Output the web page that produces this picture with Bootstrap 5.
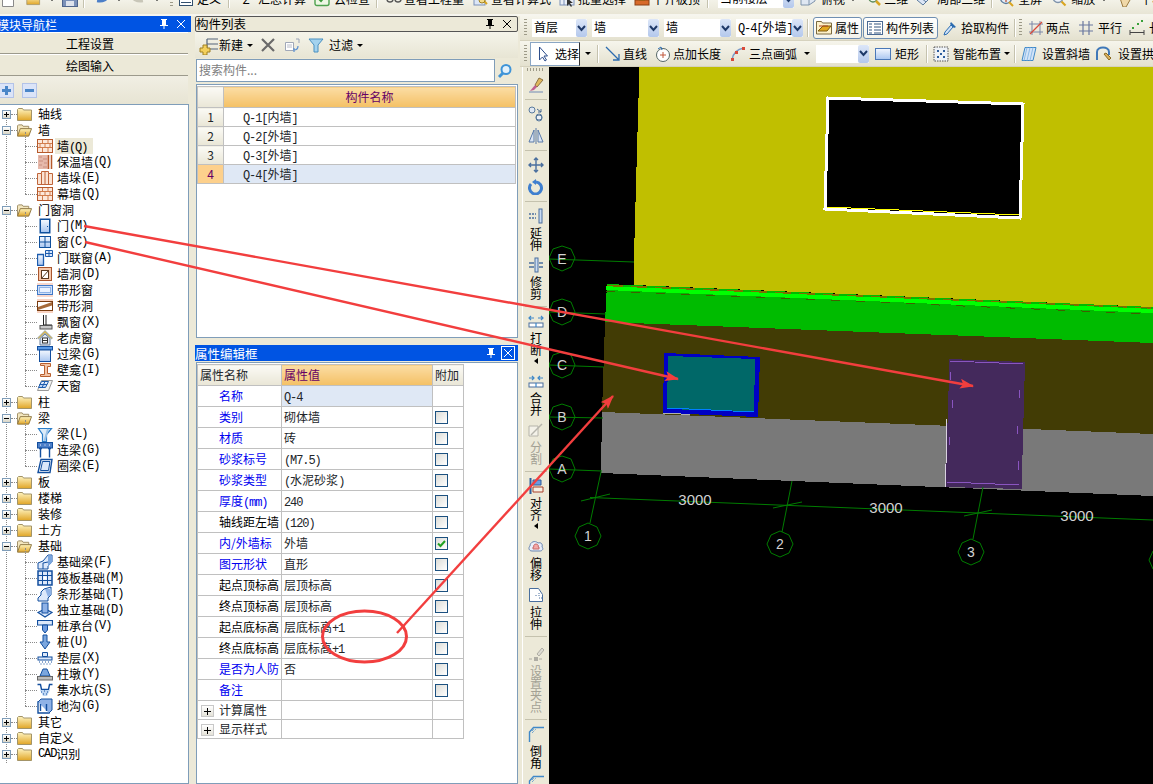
<!DOCTYPE html>
<html lang="zh-CN">
<head>
<meta charset="UTF-8">
<title>GCL</title>
<link href="https://cdn.jsdelivr.net/npm/bootstrap@5.3.0/dist/css/bootstrap.min.css" rel="stylesheet">
<style>
html, body { height: 784px; overflow: hidden; }
body { background: #ece9d8; color: #000; font: 12px/16px "Noto Sans CJK SC", "Liberation Sans", sans-serif; position: relative; }
.lat { font: 12px/12px "Liberation Mono", monospace; letter-spacing: -1.1px; }
.ico { width: 16px; height: 16px; flex: none; display: block; }
.sp1 { margin-left: 1px; } .sp3 { margin-left: 3px; } .sp4 { margin-left: 4px; } .sp5 { margin-left: 5px; }
.sp6 { margin-left: 6px; } .sp7 { margin-left: 7px; } .sp8 { margin-left: 8px; } .sp9 { margin-left: 9px; } .sp10 { margin-left: 10px; }

/* toolbars */
.top-bar { height: 16px; overflow: hidden; background: linear-gradient(#f3f2e8, #e8e5d5); border-bottom: 2px solid #f6f5ee; }
.top-inner { height: 22px; margin-top: -12px; }
.tool-row { height: 25px; flex: none; background: linear-gradient(#f6f5ec, #e4e1cf); border-bottom: 1px solid #d6d2be; white-space: nowrap; overflow: hidden; }
.tool-row-low { height: 26px; }
.tool-btn { display: inline-flex; align-items: center; padding: 0; border: 0; border-radius: 0; color: #000; font-size: 12px; line-height: 16px; white-space: nowrap; flex: none; }
.tool-grip { width: 3px; height: 18px; flex: none; background: repeating-linear-gradient(#9d9a88 0 1px, transparent 1px 3px); }
.tool-sep { width: 1px; height: 18px; flex: none; background: #c5c2ae; border-right: 1px solid #fff; box-sizing: content-box; }
.tool-caret { width: 0; height: 0; flex: none; border: 3px solid transparent; border-top: 3px solid #000; border-bottom: 0; }
.gap2 { gap: 2px; } .gap3 { gap: 3px; } .gap4 { gap: 4px; } .gap5 { gap: 5px; } .gap6 { gap: 6px; } .gap8 { gap: 8px; } .gap9 { gap: 9px; }
.sel-box { height: 18px; background: #fff; flex: none; overflow: hidden; padding-left: 2px; }
.sel-text { flex: 1; overflow: hidden; white-space: nowrap; }
.sel-arrow { width: 11px; flex: none; background: linear-gradient(#dce6f8, #b4c8ec); display: flex; align-items: center; justify-content: center; border-radius: 2px; }
.w53 { width: 53px; } .w55 { width: 55px; } .w67 { width: 67px; } .w76 { width: 76px; }
.toggle-btn { height: 22px; background: linear-gradient(#fff, #f4f3ea); border: 1px solid #6f8fb2; border-radius: 3px; }
.w49 { width: 49px; } .w50 { width: 50px; } .w75 { width: 75px; }
.pick-btn { background: #fff; border: 1px solid #8aa6c4; border-right-color: #333; height: 24px; padding-left: 7px; gap: 7px; }

/* docking panes */
.nav-pane { width: 195px; flex: none; }
.mid-pane { width: 323px; flex: none; }
.draw-pane { width: 633px; margin-left: 2px; flex: none; }
.work { height: 768px; }
.dock-title { height: 16px; line-height: 15px; flex: none; font-size: 12.5px; white-space: nowrap; overflow: hidden; padding-right: 4px; }
.dock-on { background: #0054e3; color: #fff; }
.dock-off { background: #ece9d8; border: 1px solid #555; border-radius: 2px; line-height: 14px; }
.dock-name { flex: 1; }
.dock-cut { margin-left: -3px; font-size: 12px; }
.dock-short { width: 191px; }
.dock-close { width: 12px; height: 12px; margin-left: 5px; }
.dock-box { outline: 1px solid #fff; outline-offset: 0; border-color: #000; }
.dock-gap { margin-top: 7px; }
.nav-body { width: 189px; flex: 1; min-height: 0; display: flex; flex-direction: column; }
.nav-btn { height: 22px; width: 188px; padding: 0 8px 0 0; background: #ece9d8; border: 0; border-top: 1px solid #fff; border-bottom: 1px solid #9c9a8c; border-radius: 0; font-size: 12px; line-height: 19px; color: #000; flex: none; }
.nav-tool { height: 28px; flex: none; width: 188px; background: linear-gradient(#f1efe4, #e7e4d3); padding-top: 7px; gap: 8px; }
.nav-tool button { width: 15px; height: 15px; border: 1px solid #b3c3e8; background: #dbe4f8; padding: 0; display: flex; align-items: center; justify-content: center; position: relative; }
.nav-tool button:first-child { margin-left: -1px; }
.nav-tool b { display: block; background: #4a86c8; width: 9px; height: 3px; }
.nav-tool .add-mark::after { content: ""; position: absolute; left: 5px; top: 2px; width: 3px; height: 9px; background: #4a86c8; }
.tree-body { position: relative; flex: 1; background: #fff; border: 1px solid #7f9db9; border-left: 0; padding-top: 1px; }
.tree-body::before { content: ""; position: absolute; left: 6px; top: 10px; height: 648px; border-left: 1px dotted #8a8a8a; }
.tree-row { height: 16px; display: flex; align-items: center; white-space: nowrap; position: relative; padding-left: 2px; }
.tree-exp { width: 9px; height: 9px; flex: none; border: 1px solid #7f9db9; background: linear-gradient(#fff, #d8d5c6); position: relative; }
.tree-exp::before { content: ""; position: absolute; left: 1px; top: 3px; width: 5px; height: 1px; background: #000; }
.tree-exp.shut::after { content: ""; position: absolute; left: 3px; top: 1px; width: 1px; height: 5px; background: #000; }
.tree-dash { width: 6px; flex: none; border-top: 1px dotted #8a8a8a; }
.tree-fold { width: 15px; height: 13px; flex: none; margin-right: 6px; }
.tree-kids { position: relative; }
.tree-kids::before { content: ""; position: absolute; left: 25px; top: -6px; bottom: 8px; border-left: 1px dotted #8a8a8a; }
.tree-kids .tree-row { padding-left: 25px; }
.tree-kids .tree-dash { width: 12px; }
.tree-kids .ico { margin-right: 4px; }
.tree-on { background: #ece9d8; margin-left: -2px; padding: 0 6px 0 2px; }

/* component list */
.list-tool { height: 26px; flex: none; background: linear-gradient(#f5f4ea, #e8e5d4); padding-left: 4px; }
.find-row { height: 23px; flex: none; margin: 1px 0 0 1px; width: 321px; }
.find-row .form-control { height: 23px; min-height: 0; padding: 0 2px 3px; border: 1px solid #7f9db9; border-radius: 0; font-size: 12px; box-shadow: none; }
.find-row .form-control::placeholder { color: #808080; }
.find-row .btn { width: 23px; padding: 3px; border: 0; background: transparent; border-radius: 0; }
.grid-box { background: #fff; border: 1px solid #7f9db9; margin: 2px 0 0 1px; width: 322px; padding: 1px 0 0 0; }
.list-box { height: 254px; flex: none; }
.prop-box { flex: 1; margin-top: 1px; }
.data-table { --bs-table-border-color: #c0c0c0; table-layout: fixed; font-size: 12px; line-height: 16px; }
.data-table > :not(caption) > * > * { padding: 0 2px; vertical-align: middle; white-space: nowrap; overflow: hidden; }
.list-table { width: 318px; }
.list-table thead tr { height: 21px; }
.list-table tbody tr { height: 19px; }
.c-no { width: 26px; } .c-name { width: 292px; }
.cell-corner { background-image: linear-gradient(#fbfaf5, #e9e6d6); }
.cell-orange { background-image: linear-gradient(#fbdda4, #f4c064); color: #660066; font-weight: 400; }
.cell-num { text-align: center; background-image: linear-gradient(#fbfaf5, #e9e6d6); }
.data-table .cell-picked { background-color: #fdd08c; background-image: none; color: #660066; }
.data-table .cell-sel { background-color: #dfe8f5; }
.data-table .cell-item { padding-left: 19px; }
.prop-table { width: 266px; }
.prop-table thead tr { height: 21px; }
.prop-table tbody tr { height: 21px; }
.prop-table tbody tr.low-row { height: 19px; }
.c-key { width: 84px; } .c-val { width: 151px; } .c-add { width: 31px; }
.data-table .cell-key { padding-left: 21px; color: #000; }
.data-table .cell-blue { color: #0000f0; }
.data-table .cell-add { padding: 0 0 0 2px; }
.chk-box { display: block; width: 13px; height: 13px; border: 1px solid #1c5180; background: linear-gradient(135deg, #dcdcd7, #fff); }
.plus-box { display: inline-block; width: 13px; height: 12px; border: 1px solid #c8c8c8; background: linear-gradient(#fff, #e4e2d8); position: relative; vertical-align: -2px; margin: 0 5px 0 1px; }
.plus-box::before { content: ""; position: absolute; left: 2px; top: 5px; width: 7px; height: 1px; background: #000; }
.plus-box::after { content: ""; position: absolute; left: 5px; top: 2px; width: 1px; height: 7px; background: #000; }
.data-table .cell-plus { padding-left: 2px; }

/* drawing area */
.vbar { flex: none; border-left: 1px solid #fff; margin-left: 2px; width: 27px; gap: 6px; overflow: hidden; height: 717px; }
.v-grip { width: 18px; height: 3px; flex: none; margin-top: 1px; background: repeating-linear-gradient(90deg, #9d9a88 0 1px, transparent 1px 3px); }
.v-sep { width: 22px; height: 1px; flex: none; background: #c5c2ae; }
.v-btn { display: flex; flex-direction: column; align-items: center; padding: 0; border: 0; border-radius: 0; color: #000; font-size: 12px; line-height: 12px; gap: 3px; flex: none; }
.v-label { width: 12px; word-break: break-all; text-align: center; }
.v-off { color: #a3a194; }
.v-off .ico { opacity: .45; }
.v-caret { width: 0; height: 0; border: 3px solid transparent; border-left: 0; border-right: 4px solid #000; margin: -1px 0 3px; }
.v-more { margin-top: 3px; }
.cad-view { flex: none; display: block; background: #000; width: 604px; height: 717px; }
.mark-up { position: absolute; left: 0; top: 0; width: 1153px; height: 784px; pointer-events: none; }
</style>
</head>
<body>
<svg width="0" height="0" class="position-absolute">
  <defs>
    <linearGradient id="gold" x1="0" y1="0" x2="0" y2="1"><stop offset="0" stop-color="#fff4c0"/><stop offset="1" stop-color="#e0a526"/></linearGradient>
    <linearGradient id="pale" x1="0" y1="0" x2="0" y2="1"><stop offset="0" stop-color="#f4f8ff"/><stop offset="1" stop-color="#a9c6f0"/></linearGradient>
    <symbol id="i-fold" viewBox="0 0 15 13"><path d="M.5 1.500 1.500.5h4l1 1.500h8v10.500H.5z" fill="url(#gold)" stroke="#a39468"/></symbol>
    <symbol id="i-open" viewBox="0 0 16 13"><path d="M.5 12V1.500l1-1h4l1 1.500h6v2.500" fill="#f3e6be" stroke="#9c8a60"/><path d="M3.500 4.500h12l-3 8H.5z" fill="url(#gold)" stroke="#8c7440"/></symbol>
    <symbol id="i-brick" viewBox="0 0 16 16"><rect x=".5" y="1.500" width="15" height="13" fill="#fce7da" stroke="#b65a2c"/><path d="M1 5.500h14M1 9.500h14M5.500 2v3.500M11 2v3.500M3 5.500v4M8 5.500v4M13 5.500v4M5.500 9.500V14M11 9.500V14" stroke="#d17d4e" fill="none"/></symbol>
    <symbol id="i-warm" viewBox="0 0 16 16"><rect x="1" y="1" width="10" height="14" fill="#e6b9ab"/><path d="M2 3h3M6 5h4M2 7h4M7 9h3M2 11h3M6 13h4" stroke="#c98f80"/><path d="M11.500 1v14M14.500 1v14" stroke="#b65a2c" stroke-width="1.500"/></symbol>
    <symbol id="i-pier" viewBox="0 0 16 16"><path d="M.5 3.500h4V1.500h7v2h4v11h-15z" fill="#fbe4d4" stroke="#c0653a"/><path d="M4.500 3.500V14.500M11.500 3.500V14.500M8 2v12" stroke="#c0653a"/></symbol>
    <symbol id="i-door" viewBox="0 0 16 16"><rect x="2.500" y=".5" width="11" height="15" fill="#0e4f9c"/><rect x="4" y="2" width="8" height="12" fill="url(#pale)"/><rect x="10" y="8" width="1" height="1" fill="#0e4f9c"/></symbol>
    <symbol id="i-win" viewBox="0 0 16 16"><rect x="2.500" y="2.500" width="11" height="11" fill="url(#pale)" stroke="#0e4f9c"/><path d="M8 3v10M3 8h10" stroke="#0e4f9c"/></symbol>
    <symbol id="i-doorwin" viewBox="0 0 16 16"><path d="M.5 4.500h6v11h-6z" fill="url(#pale)" stroke="#1d5cae" stroke-width="1.300"/><path d="M8.500.5h7v6h-7zM12 1v5M9 3.500h6" fill="#dbe7fa" stroke="#1d5cae"/></symbol>
    <symbol id="i-hole" viewBox="0 0 16 16"><rect x="1.500" y="1.500" width="13" height="13" fill="#f6c9ad" stroke="#a9552c"/><rect x="4.500" y="4.500" width="7" height="8" fill="#fff" stroke="#5c3a20"/><path d="M4.500 12.500l7-8" stroke="#5c3a20"/></symbol>
    <symbol id="i-swin" viewBox="0 0 16 16"><rect x="0" y="1" width="16" height="14" fill="#f9d8cc"/><rect x=".5" y="3.500" width="15" height="9" fill="#cfe0f8" stroke="#3f78c8"/><rect x="2.500" y="5.500" width="11" height="5" fill="#eaf2ff" stroke="#8fb2e6"/></symbol>
    <symbol id="i-shole" viewBox="0 0 16 16"><rect x="0" y="1" width="16" height="14" fill="#f9d3c2"/><rect x=".5" y="3.500" width="15" height="9" fill="#fff" stroke="#7a3c10"/><path d="M1 9 15 4v3.500L1 12z" fill="#a66a3a"/></symbol>
    <symbol id="i-bay" viewBox="0 0 16 16"><path d="M6.500 1v10M9 1v10M6.500 11H15" stroke="#222" fill="none"/><rect x="3" y="11.500" width="12" height="3.500" fill="#c8c8c8" stroke="#555"/></symbol>
    <symbol id="i-dorm" viewBox="0 0 16 16"><path d="M8 .5 15.500 8l-1 1L8 3 1.500 9l-1-1z" fill="#e0bc50" stroke="#6f8fb8" stroke-width=".6"/><path d="M3 8.500 8 4l5 4.500V15H3z" fill="#dde6f3" stroke="#6a7f98"/><rect x="5.500" y="8" width="5" height="5" fill="#fff" stroke="#333"/><path d="M5.500 10.500h5" stroke="#333"/></symbol>
    <symbol id="i-lint" viewBox="0 0 16 16"><rect x=".5" y=".5" width="15" height="3.500" fill="#5a9ae6" stroke="#124e9e"/><rect x="2.500" y="4" width="11" height="11.500" fill="url(#pale)" stroke="#124e9e"/></symbol>
    <symbol id="i-nich" viewBox="0 0 16 16"><path d="M3.500 1.500h10v3h-3v7h3v3h-10v-2h4v-9h-4z" fill="#f3c5a6" stroke="#b9602e"/></symbol>
    <symbol id="i-sky" viewBox="0 0 16 16"><path d="M4.500 2.500h11l-4 10H.5z" fill="#f1f1ef" stroke="#999"/><path d="M4.500 3.500h7l-3 6h-7z" fill="url(#pale)" stroke="#1d5cae"/><path d="M8 3.500 5 9.500M2.500 6.500h7.500" stroke="#1d5cae"/></symbol>
    <symbol id="i-beam" viewBox="0 0 16 16"><path d="M1.500 2.500h13l-5 6v7h-4v-7z" fill="#dcecf9" stroke="#2c7ec8" stroke-width="1.200"/><path d="M11 3 7.500 15" stroke="#9cc2e6" stroke-width="2"/></symbol>
    <symbol id="i-link" viewBox="0 0 16 16"><rect x=".5" y=".5" width="15" height="5.500" fill="#4c7fc8" stroke="#124e9e"/><path d="M3 3h1M7.500 3h1M12 3h1" stroke="#fff"/><path d="M3.500 6v9.500M12.500 6v9.500M2 6.500h3M11 6.500h3" stroke="#124e9e" stroke-width="1.400"/></symbol>
    <symbol id="i-ring" viewBox="0 0 16 16"><path d="M4 1.500h11l-2 13H1z" fill="#fff" stroke="#124e9e" stroke-width="1.400"/><path d="M5.500 3.500h7.500l-1.500 9H3.500z" fill="#dce8fa" stroke="#124e9e"/></symbol>
    <symbol id="i-fbeam" viewBox="0 0 16 16"><path d="M1 15V9l5-2 5-6h4v7l-4 4v3z" fill="#dce8fa" stroke="#124e9e"/><path d="M11 1.500h4v7l-4 4z" fill="#7ba6de"/><path d="M6 15V9l5-1" fill="none" stroke="#124e9e"/></symbol>
    <symbol id="i-raft" viewBox="0 0 16 16"><rect x="1" y="1" width="14" height="14" fill="#dce8fa" stroke="#124e9e" stroke-width="1.500"/><path d="M1 5.500h14M1 10.500h14M5.500 1v14M10.500 1v14" stroke="#124e9e"/><rect x="6.500" y="6.500" width="3" height="3" fill="#fff"/></symbol>
    <symbol id="i-sfoot" viewBox="0 0 16 16"><path d="M1 15v-3l3-3V6l3-3 7-2v8l-3 3v3z" fill="#dce8fa" stroke="#124e9e"/><path d="M8 3h6v6l-3 2z" fill="#8fb2e6"/></symbol>
    <symbol id="i-ifoot" viewBox="0 0 16 16"><path d="M1 10.500 8 7l7 3.500L8 15z" fill="#dce8fa" stroke="#124e9e" stroke-width="1.200"/><rect x="5" y="1" width="6" height="10" fill="#8fb2e6" stroke="#124e9e"/></symbol>
    <symbol id="i-cap" viewBox="0 0 16 16"><path d="M.5 2.500h15v4.500H.5z" fill="#dce8fa" stroke="#124e9e" stroke-width="1.200"/><path d="M5.500 7h5v5l-2.500 3-2.500-3z" fill="#6d9be0" stroke="#124e9e"/></symbol>
    <symbol id="i-pile" viewBox="0 0 16 16"><path d="M6 1h4v7h3l-5 7-5-7h3z" fill="#7ba6de" stroke="#124e9e"/></symbol>
    <symbol id="i-pad" viewBox="0 0 16 16"><path d="M5.500 2.500h5v4h-5z" fill="#dce8fa" stroke="#124e9e"/><rect x="1" y="7" width="14" height="3" fill="#dce8fa" stroke="#124e9e"/><path d="M2 12h1M5 12h1M8 12h1M11 12h1M14 12h1M3.500 14h1M6.500 14h1M9.500 14h1M12.500 14h1" stroke="#124e9e"/></symbol>
    <symbol id="i-base" viewBox="0 0 16 16"><path d="M6 3h4l3 7H3z" fill="#7ba6de" stroke="#124e9e"/><rect x=".5" y="10.500" width="15" height="3.500" fill="#bdbdbd" stroke="#666"/></symbol>
    <symbol id="i-sump" viewBox="0 0 16 16"><path d="M.5 2.500h3l1 5h7l1-5h3M.5 2.500" fill="none" stroke="#124e9e" stroke-width="1.400"/><path d="M3 8h10l-3 6H6z" fill="#bcd5f3"/><path d="M4 10h1M7 9h1M10 10h1M6 12h1M9 12h1" stroke="#124e9e"/></symbol>
    <symbol id="i-trch" viewBox="0 0 16 16"><path d="M1 4h11v11H1z" fill="#fff" stroke="#124e9e" stroke-width="1.400"/><path d="M1 4l3-3h11v11l-3 3" fill="#8fb2e6" stroke="#124e9e"/><path d="M3.500 6v7M9.500 6v7" stroke="#124e9e" stroke-width="1.400"/></symbol>

    <symbol id="t-doc" viewBox="0 0 16 16"><path d="M2.500 .5h11v15h-11z" fill="#fff" stroke="#8a8a8a"/></symbol>
    <symbol id="t-folder" viewBox="0 0 20 16"><path d="M1 4h7l1 2h8v9H1z" fill="url(#gold)" stroke="#a39468"/></symbol>
    <symbol id="t-save" viewBox="0 0 16 16"><rect x=".5" y=".5" width="15" height="15" fill="#7a90b8" stroke="#4e648c"/><rect x="4" y="10" width="8" height="5" fill="#dde2ec"/></symbol>
    <symbol id="t-undo" viewBox="0 0 16 16"><path d="M14 3c0 6-5 8-11 7" fill="none" stroke="#4c7fc8" stroke-width="2.500"/></symbol>
    <symbol id="t-redo" viewBox="0 0 16 16"><path d="M1 3c0 6 5 8 11 7" fill="none" stroke="#c8c6b8" stroke-width="2.500"/></symbol>
    <symbol id="t-tab" viewBox="0 0 16 16"><rect x="1.500" y="5.500" width="13" height="9" fill="#fff" stroke="#33506e"/><path d="M3 8.500h10M3 11.500h10" stroke="#33506e"/></symbol>
    <symbol id="t-check" viewBox="0 0 16 16"><rect x="1" y="2" width="14" height="12.500" rx="2" fill="#eef7e4" stroke="#4fa24f" stroke-width="1.400"/><path d="M4 7l3 3 5-6" fill="none" stroke="#3c9a3c" stroke-width="2"/></symbol>
    <symbol id="t-glass" viewBox="0 0 16 16"><circle cx="4" cy="8" r="3" fill="none" stroke="#555" stroke-width="1.400"/><circle cx="12" cy="8" r="3" fill="none" stroke="#555" stroke-width="1.400"/><path d="M7 8h2" stroke="#555"/></symbol>
    <symbol id="t-calc" viewBox="0 0 16 16"><rect x="1" y="3" width="11" height="11" fill="#dce6f6" stroke="#7a90b8"/><path d="M9 8l5 5" stroke="#d9a520" stroke-width="2"/><circle cx="9" cy="9" r="3" fill="#f4dc8c" stroke="#a08020"/></symbol>
    <symbol id="t-batch" viewBox="0 0 16 16"><rect x="1" y="3" width="14" height="11" fill="#e9eef7" stroke="#7a90b8"/><path d="M5 3v11M10 3v11M1 8h14" stroke="#7a90b8"/><path d="M8 7v8l2-2 2 3 1-1-2-3h3z" fill="#333"/></symbol>
    <symbol id="t-level" viewBox="0 0 16 16"><rect x="1" y="9" width="14" height="5" fill="#d86a2a" stroke="#8c4014"/><path d="M5 3h6v6H5z" fill="#f0cf60" stroke="#8a6a10"/></symbol>
    <symbol id="t-view" viewBox="0 0 16 16"><path d="M1 5l6-3h8v8l-6 4H1z" fill="#dfe7f2" stroke="#7f93ab"/><path d="M9 14V5l6-3M9 5H1" fill="none" stroke="#7f93ab"/></symbol>
    <symbol id="t-3d" viewBox="0 0 16 16"><circle cx="7" cy="7" r="4" fill="#f2f8ee" stroke="#5a8a5a" stroke-width="1.400"/><path d="M10 10l4 4" stroke="#d9a520" stroke-width="2.500"/></symbol>
    <symbol id="t-part" viewBox="0 0 16 16"><path d="M1 9l8-8 6 5-8 8z" fill="#dce6f6" stroke="#5a7a9c"/><path d="M4 6l6 5M7 3l6 5" stroke="#5a7a9c"/></symbol>
    <symbol id="t-zoomall" viewBox="0 0 16 16"><circle cx="8" cy="7" r="5.500" fill="#e3ecf7" stroke="#5a7a9c" stroke-width="1.300"/><path d="M8 3v8M4 7h8" stroke="#c0563a" stroke-width="1.300"/><path d="M11 11l4 4" stroke="#d9a520" stroke-width="2"/></symbol>
    <symbol id="t-zoom" viewBox="0 0 16 16"><circle cx="7" cy="6.500" r="5" fill="#eef3fa" stroke="#7f93ab" stroke-width="1.300"/><path d="M10.500 10.500l4 4" stroke="#d9a520" stroke-width="2.200"/></symbol>
    <symbol id="t-hand" viewBox="0 0 16 16"><path d="M4 7V3l2-1 1 4V1h2v5l1-4 2 1-1 5 2-1 1 2-4 7H7z" fill="#f0d8a8" stroke="#9a7a40"/></symbol>

    <symbol id="d-prop" viewBox="0 0 16 16"><path d="M.5 3V1.500h5l1 1.500h9v11H.5z" fill="#fdf0c8" stroke="#7a6a40"/><path d="M2 11 7 6h8l-4 5z" fill="#e2a820" stroke="#7a5a10"/><path d="M3 6h9" stroke="#b04a20"/></symbol>
    <symbol id="d-list" viewBox="0 0 16 16"><rect x=".5" y="1.500" width="15" height="13" fill="#fff" stroke="#4a6a94"/><path d="M2 4h3M2 7h3M2 10h3M2 13h3M7 4h7M7 7h7M7 10h7M7 13h7" stroke="#33557f"/></symbol>
    <symbol id="d-pick" viewBox="0 0 16 16"><path d="M9 2l5 5-2 1-4-4z" fill="#2c6cb0"/><path d="M9 5l2 2-6 7-3 1 1-3z" fill="#cfe2f8" stroke="#2c6cb0"/></symbol>
    <symbol id="d-two" viewBox="0 0 16 16"><path d="M4 1v14M12 1v14M1 4h14M1 12h14" stroke="#7a86a8"/><path d="M2 14 14 2" stroke="#d84a3a" stroke-width="1.300"/></symbol>
    <symbol id="d-para" viewBox="0 0 16 16"><path d="M5 1v14M11 1v14M1 5h14M1 11h14" stroke="#6a78a0" stroke-width="1.200"/></symbol>
    <symbol id="d-long" viewBox="0 0 16 16"><path d="M1 10v5M15 10v5M1 12.500h14" stroke="#444"/><path d="M3 8h2M8 4h2M12 1h2" stroke="#38a038" stroke-width="2"/></symbol>
    <symbol id="d-arrow" viewBox="0 0 10 16"><path d="M1.500 1v13l3-3L7 15l1.500-1-2.500-4h3.500z" fill="#fff" stroke="#2a4a8a"/></symbol>
    <symbol id="d-line" viewBox="0 0 16 16"><path d="M1 1l13 13M14 8v6H8" fill="none" stroke="#2c6cb0" stroke-width="1.300"/></symbol>
    <symbol id="d-plus" viewBox="0 0 16 16"><circle cx="8" cy="9" r="6.500" fill="#fff" stroke="#566"/><path d="M5 9h6M8 6v6" stroke="#c0563a"/><path d="M3 3l3-2 1 3" fill="none" stroke="#2c6cb0"/></symbol>
    <symbol id="d-arc" viewBox="0 0 16 16"><path d="M2 14C3 7 7 3 14 2" fill="none" stroke="#7a98c8" stroke-width="1.500"/><rect x="1" y="12" width="3" height="3" fill="#d84a3a"/><rect x="5" y="5" width="3" height="3" fill="#d84a3a"/><rect x="12" y="1" width="3" height="3" fill="#d84a3a"/></symbol>
    <symbol id="d-rect" viewBox="0 0 16 16"><rect x=".5" y="2.500" width="15" height="11" fill="url(#pale)" stroke="#4a78b8"/></symbol>
    <symbol id="d-smart" viewBox="0 0 16 16"><rect x="1" y="1" width="14" height="14" fill="#eef2f7" stroke="#555" stroke-dasharray="1.500 1"/><path d="M4 4h2v2H4zM10 4h2v2h-2zM4 10h2v2H4zM10 10h2v2h-2zM7 7h2v2H7z" fill="#2c5c9c"/></symbol>
    <symbol id="d-skew" viewBox="0 0 16 16"><path d="M4 1.500h11l-3 13H1z" fill="#d3e4f8" stroke="#3f88c8"/><path d="M6 1.500l-3 13M9 1.500l-3 13M12 1.500l-3 13" stroke="#8fbce6"/></symbol>
    <symbol id="d-bow" viewBox="0 0 16 16"><path d="M1 14V6c0-6 12-6 12 0v3" fill="none" stroke="#3f78b8" stroke-width="2"/><path d="M8 8l5 6 2-2-5-5z" fill="#d9b060" stroke="#8a6a20"/></symbol>

    <symbol id="v-brush" viewBox="0 0 16 16"><path d="M11 1l4 2-6 7-2-2z" fill="#e0b85c" stroke="#8a7040"/><path d="M7 8l2 2-3 3-4 1z" fill="#c06090"/><path d="M1 15h14" stroke="#9aa8c0" stroke-width="1.500"/></symbol>
    <symbol id="v-copy" viewBox="0 0 16 16"><circle cx="4" cy="4" r="3" fill="#dfe7f2" stroke="#5a7a9c"/><circle cx="11" cy="12" r="3" fill="#eef2f7" stroke="#5a7a9c"/><circle cx="11" cy="11" r="3" fill="none" stroke="#5a7a9c"/><path d="M9 3l4 3M13 3v3h-3" fill="none" stroke="#4a6a94"/></symbol>
    <symbol id="v-mirror" viewBox="0 0 16 16"><path d="M6 2v12H1zM10 2v12h5z" fill="#dce6f4" stroke="#5a7aa8"/><path d="M8 0v16" stroke="#5a7aa8"/></symbol>
    <symbol id="v-move" viewBox="0 0 16 16"><path d="M8 1v14M1 8h14M6 3l2-2 2 2M6 13l2 2 2-2M3 6 1 8l2 2M13 6l2 2-2 2" fill="none" stroke="#4a6f9e" stroke-width="1.400"/></symbol>
    <symbol id="v-turn" viewBox="0 0 16 16"><path d="M3 5a6 6 0 1 0 5-2" fill="none" stroke="#3f7fcf" stroke-width="3"/><path d="M8 0v6L4 3z" fill="#3f7fcf"/></symbol>
    <symbol id="v-extend" viewBox="0 0 16 16"><rect x="11" y="1" width="3" height="14" fill="#c9dcf4" stroke="#4a6f9e"/><path d="M1 6h7M1 10h7" stroke="#4a6f9e" stroke-dasharray="2 1" stroke-width="1.300"/></symbol>
    <symbol id="v-trim" viewBox="0 0 16 16"><rect x="7" y="1" width="3" height="14" fill="#c9dcf4" stroke="#4a6f9e"/><path d="M1 6h5M11 6h4M1 10h5M11 10h4" stroke="#4a6f9e" stroke-width="1.300"/></symbol>
    <symbol id="v-break" viewBox="0 0 16 16"><rect x="1" y="10" width="14" height="4" fill="#fff" stroke="#4a6f9e"/><path d="M8 10v4M1 5h5M3 3 1 5l2 2M15 5h-5M13 3l2 2-2 2" fill="none" stroke="#3f88c8" stroke-width="1.200"/></symbol>
    <symbol id="v-join" viewBox="0 0 16 16"><rect x="1" y="10" width="14" height="4" fill="#fff" stroke="#4a6f9e"/><path d="M8 10v4M1 5h5M4 3l2 2-2 2M15 5h-5M12 3l-2 2 2 2" fill="none" stroke="#3f88c8" stroke-width="1.200"/></symbol>
    <symbol id="v-split" viewBox="0 0 16 16"><path d="M1 4h9v10H1z" fill="#fff" stroke="#777"/><path d="M3 13 14 2" stroke="#777" stroke-width="1.500"/></symbol>
    <symbol id="v-align" viewBox="0 0 16 16"><path d="M2.500 0v16" stroke="#2c5c9c" stroke-width="2"/><path d="M5 2h8v5H5z" fill="#6d9be0" stroke="#2c5c9c"/><path d="M5 9h10v5H5z" fill="#f6f0e4" stroke="#a8402a"/></symbol>
    <symbol id="v-off" viewBox="0 0 16 16"><path d="M4 13c-3 0-4-3-2-5 0-4 5-6 8-3 3-1 5 1 4 4 2 2 0 4-2 4z" fill="#e8eefa" stroke="#6a86b0"/><path d="M8 6c-2 0-3 2-2 3H5v2h6V9h-1c1-1 0-3-2-3z" fill="#f3a8a8" stroke="#c86a6a"/></symbol>
    <symbol id="v-stretch" viewBox="0 0 16 16"><path d="M1.500 1.500h9l4 6v7h-13z" fill="#fff" stroke="#4a6f9e"/><path d="M11 6v3M11 11h3M8 8v2" stroke="#4a6f9e" stroke-dasharray="1 1"/></symbol>
    <symbol id="v-grip-p" viewBox="0 0 16 16"><path d="M1 13h14" stroke="#666" stroke-dasharray="3 2"/><rect x="6" y="11" width="4" height="4" fill="#666"/><path d="M9 8l5-6 2 2-5 6z" fill="#ccc" stroke="#666"/></symbol>
    <symbol id="v-fillet" viewBox="0 0 16 16"><path d="M1.500 16V6l4-4.500H16" fill="none" stroke="#3f88c8" stroke-width="1.400"/><path d="M4 5l2-2M4 7l4-4" stroke="#3f88c8" stroke-dasharray="1 1"/></symbol>
    <symbol id="m-new" viewBox="0 0 20 20"><path d="M8 4h11M8 9h11M8 14h11M8 4v10" fill="none" stroke="#55657a" stroke-width="1.200"/><path d="M4 10h4v3h3v4H8v3H4v-3H1v-4h3z" fill="#f3d05c" stroke="#a08020"/></symbol>
    <symbol id="m-del" viewBox="0 0 16 16"><path d="M2 2l12 12M14 2 2 14" stroke="#6a6a6a" stroke-width="2.200"/></symbol>
    <symbol id="m-dup" viewBox="0 0 16 16"><path d="M1.500 5.500h8v8h-8z" fill="#fff" stroke="#a0a8b8"/><path d="M3 8h5M3 10h5" stroke="#b8bcc8"/><path d="M12 2h3v4" fill="none" stroke="#9aa4b8"/><path d="M14 9c0 3-2 4-4 4M10 11v4" fill="none" stroke="#5a8fd0" stroke-width="1.200"/></symbol>
    <symbol id="m-filter" viewBox="0 0 16 16"><path d="M1 2h14L10 8v7H6V8z" fill="#a3d2ee" stroke="#4a90c0"/></symbol>
    <symbol id="m-find" viewBox="0 0 16 16"><circle cx="9" cy="6.500" r="4.500" fill="#e3f1fb" stroke="#3f94d8" stroke-width="2"/><path d="M6 10l-4 4" stroke="#3f94d8" stroke-width="3"/></symbol>
    <symbol id="g-pin" viewBox="0 0 12 12"><path d="M3 1h6v1H8v5h2v1H6.500v3h-1V8H2V7h2V2H3z" fill="currentColor"/></symbol>
    <symbol id="g-close" viewBox="0 0 12 12"><path d="M2 2l8 8M10 2l-8 8" stroke="currentColor" fill="none"/></symbol>
    <symbol id="g-down" viewBox="0 0 11 9"><path d="M2 2l3.500 4L9 2" fill="none" stroke="#1f3a68" stroke-width="2"/></symbol>
  </defs>
</svg>

<div class="top-bar">
  <div class="top-inner d-flex align-items-center">
    <svg class="ico"><use href="#t-doc"/></svg>
    <svg class="ico sp10"><use href="#t-folder"/></svg>
    <span class="tool-caret sp7"></span>
    <svg class="ico sp7"><use href="#t-save"/></svg>
    <span class="tool-sep sp5"></span>
    <svg class="ico sp9"><use href="#t-undo"/></svg>
    <span class="tool-caret sp6"></span>
    <svg class="ico sp9"><use href="#t-redo"/></svg>
    <span class="tool-caret sp7"></span>
    <span class="tool-grip sp10"></span>
    <button class="btn tool-btn gap3 sp5"><svg class="ico"><use href="#t-tab"/></svg>定义</button>
    <span class="tool-sep sp7"></span>
    <button class="btn tool-btn gap4 sp8"><span class="ico text-center">Σ</span>汇总计算</button>
    <button class="btn tool-btn gap4 sp8"><svg class="ico"><use href="#t-check"/></svg>云检查</button>
    <span class="tool-sep sp6"></span>
    <button class="btn tool-btn gap2 sp8"><svg class="ico"><use href="#t-glass"/></svg>查看工程量</button>
    <button class="btn tool-btn gap2 sp9"><svg class="ico"><use href="#t-calc"/></svg>查看计算式</button>
    <button class="btn tool-btn gap3 sp8"><svg class="ico"><use href="#t-batch"/></svg>批量选择</button>
    <button class="btn tool-btn gap2 sp8"><svg class="ico"><use href="#t-level"/></svg>平齐板顶</button>
    <span class="tool-sep sp7"></span>
    <div class="sel-box w76 sp9 d-flex"><span class="sel-text">当前楼层</span><span class="sel-arrow"><svg width="11" height="9"><use href="#g-down"/></svg></span></div>
    <button class="btn tool-btn gap5 sp6"><svg class="ico"><use href="#t-view"/></svg>俯视</button>
    <span class="tool-caret sp5"></span>
    <button class="btn tool-btn gap2 sp10"><svg class="ico"><use href="#t-3d"/></svg>三维</button>
    <button class="btn tool-btn gap5 sp8"><svg class="ico"><use href="#t-part"/></svg>局部三维</button>
    <span class="tool-sep sp6"></span>
    <button class="btn tool-btn gap4 sp5"><svg class="ico"><use href="#t-zoomall"/></svg>全屏</button>
    <button class="btn tool-btn gap4 sp9"><svg class="ico"><use href="#t-zoom"/></svg>缩放</button>
    <span class="tool-caret sp6"></span>
    <button class="btn tool-btn gap8 sp9"><svg class="ico"><use href="#t-hand"/></svg>平移</button>
  </div>
</div>

<div class="work d-flex">
  <aside class="nav-pane d-flex flex-column">
    <div class="dock-title dock-on dock-short d-flex align-items-center">
      <span class="dock-name dock-cut">模块导航栏</span>
      <svg class="dock-close"><use href="#g-pin"/></svg>
      <svg class="dock-close"><use href="#g-close"/></svg>
    </div>
    <div class="nav-body">
      <button class="btn nav-btn">工程设置</button>
      <button class="btn nav-btn">绘图输入</button>
      <div class="nav-tool d-flex">
        <button type="button" class="add-mark"><b></b></button>
        <button type="button"><b></b></button>
      </div>
      <div class="tree-body">
        <div class="tree-row"><span class="tree-exp shut"></span><span class="tree-dash"></span><svg class="tree-fold"><use href="#i-fold"/></svg>轴线</div>
        <div class="tree-row"><span class="tree-exp"></span><span class="tree-dash"></span><svg class="tree-fold"><use href="#i-open"/></svg>墙</div>
        <div class="tree-kids">
          <div class="tree-row"><span class="tree-dash"></span><svg class="ico"><use href="#i-brick"/></svg><span class="tree-on">墙<span class="lat">(Q)</span></span></div>
          <div class="tree-row"><span class="tree-dash"></span><svg class="ico"><use href="#i-warm"/></svg>保温墙<span class="lat">(Q)</span></div>
          <div class="tree-row"><span class="tree-dash"></span><svg class="ico"><use href="#i-pier"/></svg>墙垛<span class="lat">(E)</span></div>
          <div class="tree-row"><span class="tree-dash"></span><svg class="ico"><use href="#i-brick"/></svg>幕墙<span class="lat">(Q)</span></div>
        </div>
        <div class="tree-row"><span class="tree-exp"></span><span class="tree-dash"></span><svg class="tree-fold"><use href="#i-open"/></svg>门窗洞</div>
        <div class="tree-kids">
          <div class="tree-row"><span class="tree-dash"></span><svg class="ico"><use href="#i-door"/></svg>门<span class="lat">(M)</span></div>
          <div class="tree-row"><span class="tree-dash"></span><svg class="ico"><use href="#i-win"/></svg>窗<span class="lat">(C)</span></div>
          <div class="tree-row"><span class="tree-dash"></span><svg class="ico"><use href="#i-doorwin"/></svg>门联窗<span class="lat">(A)</span></div>
          <div class="tree-row"><span class="tree-dash"></span><svg class="ico"><use href="#i-hole"/></svg>墙洞<span class="lat">(D)</span></div>
          <div class="tree-row"><span class="tree-dash"></span><svg class="ico"><use href="#i-swin"/></svg>带形窗</div>
          <div class="tree-row"><span class="tree-dash"></span><svg class="ico"><use href="#i-shole"/></svg>带形洞</div>
          <div class="tree-row"><span class="tree-dash"></span><svg class="ico"><use href="#i-bay"/></svg>飘窗<span class="lat">(X)</span></div>
          <div class="tree-row"><span class="tree-dash"></span><svg class="ico"><use href="#i-dorm"/></svg>老虎窗</div>
          <div class="tree-row"><span class="tree-dash"></span><svg class="ico"><use href="#i-lint"/></svg>过梁<span class="lat">(G)</span></div>
          <div class="tree-row"><span class="tree-dash"></span><svg class="ico"><use href="#i-nich"/></svg>壁龛<span class="lat">(I)</span></div>
          <div class="tree-row"><span class="tree-dash"></span><svg class="ico"><use href="#i-sky"/></svg>天窗</div>
        </div>
        <div class="tree-row"><span class="tree-exp shut"></span><span class="tree-dash"></span><svg class="tree-fold"><use href="#i-fold"/></svg>柱</div>
        <div class="tree-row"><span class="tree-exp"></span><span class="tree-dash"></span><svg class="tree-fold"><use href="#i-open"/></svg>梁</div>
        <div class="tree-kids">
          <div class="tree-row"><span class="tree-dash"></span><svg class="ico"><use href="#i-beam"/></svg>梁<span class="lat">(L)</span></div>
          <div class="tree-row"><span class="tree-dash"></span><svg class="ico"><use href="#i-link"/></svg>连梁<span class="lat">(G)</span></div>
          <div class="tree-row"><span class="tree-dash"></span><svg class="ico"><use href="#i-ring"/></svg>圈梁<span class="lat">(E)</span></div>
        </div>
        <div class="tree-row"><span class="tree-exp shut"></span><span class="tree-dash"></span><svg class="tree-fold"><use href="#i-fold"/></svg>板</div>
        <div class="tree-row"><span class="tree-exp shut"></span><span class="tree-dash"></span><svg class="tree-fold"><use href="#i-fold"/></svg>楼梯</div>
        <div class="tree-row"><span class="tree-exp shut"></span><span class="tree-dash"></span><svg class="tree-fold"><use href="#i-fold"/></svg>装修</div>
        <div class="tree-row"><span class="tree-exp shut"></span><span class="tree-dash"></span><svg class="tree-fold"><use href="#i-fold"/></svg>土方</div>
        <div class="tree-row"><span class="tree-exp"></span><span class="tree-dash"></span><svg class="tree-fold"><use href="#i-open"/></svg>基础</div>
        <div class="tree-kids">
          <div class="tree-row"><span class="tree-dash"></span><svg class="ico"><use href="#i-fbeam"/></svg>基础梁<span class="lat">(F)</span></div>
          <div class="tree-row"><span class="tree-dash"></span><svg class="ico"><use href="#i-raft"/></svg>筏板基础<span class="lat">(M)</span></div>
          <div class="tree-row"><span class="tree-dash"></span><svg class="ico"><use href="#i-sfoot"/></svg>条形基础<span class="lat">(T)</span></div>
          <div class="tree-row"><span class="tree-dash"></span><svg class="ico"><use href="#i-ifoot"/></svg>独立基础<span class="lat">(D)</span></div>
          <div class="tree-row"><span class="tree-dash"></span><svg class="ico"><use href="#i-cap"/></svg>桩承台<span class="lat">(V)</span></div>
          <div class="tree-row"><span class="tree-dash"></span><svg class="ico"><use href="#i-pile"/></svg>桩<span class="lat">(U)</span></div>
          <div class="tree-row"><span class="tree-dash"></span><svg class="ico"><use href="#i-pad"/></svg>垫层<span class="lat">(X)</span></div>
          <div class="tree-row"><span class="tree-dash"></span><svg class="ico"><use href="#i-base"/></svg>柱墩<span class="lat">(Y)</span></div>
          <div class="tree-row"><span class="tree-dash"></span><svg class="ico"><use href="#i-sump"/></svg>集水坑<span class="lat">(S)</span></div>
          <div class="tree-row"><span class="tree-dash"></span><svg class="ico"><use href="#i-trch"/></svg>地沟<span class="lat">(G)</span></div>
        </div>
        <div class="tree-row"><span class="tree-exp shut"></span><span class="tree-dash"></span><svg class="tree-fold"><use href="#i-fold"/></svg>其它</div>
        <div class="tree-row"><span class="tree-exp shut"></span><span class="tree-dash"></span><svg class="tree-fold"><use href="#i-fold"/></svg>自定义</div>
        <div class="tree-row"><span class="tree-exp shut"></span><span class="tree-dash"></span><svg class="tree-fold"><use href="#i-fold"/></svg><span class="lat">CAD</span>识别</div>
      </div>
    </div>
  </aside>

  <section class="mid-pane d-flex flex-column">
    <div class="dock-title dock-off d-flex align-items-center">
      <span class="dock-name">构件列表</span>
      <svg class="dock-close"><use href="#g-pin"/></svg>
      <svg class="dock-close"><use href="#g-close"/></svg>
    </div>
    <div class="list-tool d-flex align-items-center">
      <button class="btn tool-btn"><svg width="20" height="20"><use href="#m-new"/></svg>新建</button>
      <span class="tool-caret sp4"></span>
      <button class="btn tool-btn sp7"><svg class="ico"><use href="#m-del"/></svg></button>
      <button class="btn tool-btn sp8"><svg class="ico"><use href="#m-dup"/></svg></button>
      <button class="btn tool-btn gap5 sp8"><svg class="ico"><use href="#m-filter"/></svg>过滤</button>
      <span class="tool-caret sp4"></span>
    </div>
    <div class="find-row input-group">
      <input class="form-control" type="text" placeholder="搜索构件...">
      <button class="btn" type="button"><svg class="ico"><use href="#m-find"/></svg></button>
    </div>
    <div class="grid-box list-box">
      <table class="table table-bordered mb-0 data-table list-table">
        <colgroup><col class="c-no"><col class="c-name"></colgroup>
        <thead><tr><th class="cell-corner"></th><th class="cell-orange text-center">构件名称</th></tr></thead>
        <tbody>
          <tr><td class="cell-num">1</td><td class="cell-item"><span class="lat">Q-1[</span>内墙<span class="lat">]</span></td></tr>
          <tr><td class="cell-num">2</td><td class="cell-item"><span class="lat">Q-2[</span>外墙<span class="lat">]</span></td></tr>
          <tr><td class="cell-num">3</td><td class="cell-item"><span class="lat">Q-3[</span>外墙<span class="lat">]</span></td></tr>
          <tr><td class="cell-num cell-picked">4</td><td class="cell-item cell-sel"><span class="lat">Q-4[</span>外墙<span class="lat">]</span></td></tr>
        </tbody>
      </table>
    </div>
    <div class="dock-title dock-on dock-gap d-flex align-items-center">
      <span class="dock-name">属性编辑框</span>
      <svg class="dock-close"><use href="#g-pin"/></svg>
      <svg class="dock-close dock-box"><use href="#g-close"/></svg>
    </div>
    <div class="grid-box prop-box">
      <table class="table table-bordered mb-0 data-table prop-table">
        <colgroup><col class="c-key"><col class="c-val"><col class="c-add"></colgroup>
        <thead><tr><th class="cell-corner fw-normal">属性名称</th><th class="cell-orange">属性值</th><th class="cell-corner fw-normal">附加</th></tr></thead>
        <tbody>
          <tr><td class="cell-key cell-blue">名称</td><td class="cell-sel"><span class="lat">Q-4</span></td><td></td></tr>
          <tr><td class="cell-key cell-blue">类别</td><td>砌体墙</td><td class="cell-add"><span class="chk-box"></span></td></tr>
          <tr><td class="cell-key cell-blue">材质</td><td>砖</td><td class="cell-add"><span class="chk-box"></span></td></tr>
          <tr><td class="cell-key cell-blue">砂浆标号</td><td><span class="lat">(M7.5)</span></td><td class="cell-add"><span class="chk-box"></span></td></tr>
          <tr><td class="cell-key cell-blue">砂浆类型</td><td><span class="lat">(</span>水泥砂浆<span class="lat">)</span></td><td class="cell-add"><span class="chk-box"></span></td></tr>
          <tr><td class="cell-key cell-blue">厚度<span class="lat">(mm)</span></td><td><span class="lat">240</span></td><td class="cell-add"><span class="chk-box"></span></td></tr>
          <tr><td class="cell-key">轴线距左墙</td><td><span class="lat">(120)</span></td><td class="cell-add"><span class="chk-box"></span></td></tr>
          <tr><td class="cell-key cell-blue">内/外墙标</td><td>外墙</td><td class="cell-add"><span class="chk-box"><svg class="d-block" width="11" height="11" viewBox="0 0 11 11"><path d="M2 5.500l2.500 2.500L9 3" fill="none" stroke="#21a121" stroke-width="2"/></svg></span></td></tr>
          <tr><td class="cell-key cell-blue">图元形状</td><td>直形</td><td class="cell-add"><span class="chk-box"></span></td></tr>
          <tr><td class="cell-key">起点顶标高</td><td>层顶标高</td><td class="cell-add"><span class="chk-box"></span></td></tr>
          <tr><td class="cell-key">终点顶标高</td><td>层顶标高</td><td class="cell-add"><span class="chk-box"></span></td></tr>
          <tr><td class="cell-key">起点底标高</td><td>层底标高<span class="lat">+1</span></td><td class="cell-add"><span class="chk-box"></span></td></tr>
          <tr><td class="cell-key">终点底标高</td><td>层底标高<span class="lat">+1</span></td><td class="cell-add"><span class="chk-box"></span></td></tr>
          <tr><td class="cell-key cell-blue">是否为人防</td><td>否</td><td class="cell-add"><span class="chk-box"></span></td></tr>
          <tr><td class="cell-key cell-blue">备注</td><td></td><td class="cell-add"><span class="chk-box"></span></td></tr>
          <tr class="low-row"><td class="cell-plus"><span class="plus-box"></span>计算属性</td><td></td><td></td></tr>
          <tr class="low-row"><td class="cell-plus"><span class="plus-box"></span>显示样式</td><td></td><td></td></tr>
        </tbody>
      </table>
    </div>
  </section>

  <main class="draw-pane d-flex flex-column">
    <div class="tool-row d-flex align-items-center">
      <span class="tool-grip sp4"></span>
      <div class="sel-box w55 sp5 d-flex"><span class="sel-text">首层</span><span class="sel-arrow"><svg width="11" height="9"><use href="#g-down"/></svg></span></div>
      <div class="sel-box w67 sp5 d-flex"><span class="sel-text">墙</span><span class="sel-arrow"><svg width="11" height="9"><use href="#g-down"/></svg></span></div>
      <div class="sel-box w67 sp5 d-flex"><span class="sel-text">墙</span><span class="sel-arrow"><svg width="11" height="9"><use href="#g-down"/></svg></span></div>
      <div class="sel-box w67 sp5 d-flex"><span class="sel-text"><span class="lat">Q-4[</span>外墙<span class="lat">]</span></span><span class="sel-arrow"><svg width="11" height="9"><use href="#g-down"/></svg></span></div>
      <span class="tool-sep sp4"></span>
      <button class="btn tool-btn toggle-btn w49 gap3 justify-content-center sp4"><svg class="ico"><use href="#d-prop"/></svg>属性</button>
      <button class="btn tool-btn toggle-btn w75 gap3 justify-content-center sp1"><svg class="ico"><use href="#d-list"/></svg>构件列表</button>
      <button class="btn tool-btn gap3 sp4"><svg class="ico"><use href="#d-pick"/></svg>拾取构件</button>
      <span class="tool-sep sp5"></span>
      <span class="tool-grip sp3"></span>
      <button class="btn tool-btn gap2 sp6"><svg class="ico"><use href="#d-two"/></svg>两点</button>
      <button class="btn tool-btn gap4 sp8"><svg class="ico"><use href="#d-para"/></svg>平行</button>
      <button class="btn tool-btn gap4 sp7"><svg class="ico"><use href="#d-long"/></svg>长度标注</button>
    </div>
    <div class="tool-row tool-row-low d-flex align-items-center">
      <span class="tool-grip sp4"></span>
      <button class="btn tool-btn pick-btn w50 sp3"><svg width="10" height="16"><use href="#d-arrow"/></svg>选择</button>
      <span class="tool-caret sp5"></span>
      <span class="tool-sep sp6"></span>
      <button class="btn tool-btn gap2 sp6"><svg class="ico"><use href="#d-line"/></svg>直线</button>
      <button class="btn tool-btn gap2 sp8"><svg class="ico"><use href="#d-plus"/></svg>点加长度</button>
      <button class="btn tool-btn gap3 sp9"><svg class="ico"><use href="#d-arc"/></svg>三点画弧</button>
      <span class="tool-caret sp7"></span>
      <div class="sel-box w53 sp6 d-flex"><span class="sel-text"></span><span class="sel-arrow"><svg width="11" height="9"><use href="#g-down"/></svg></span></div>
      <button class="btn tool-btn gap4 sp6"><svg class="ico"><use href="#d-rect"/></svg>矩形</button>
      <span class="tool-sep sp7"></span>
      <button class="btn tool-btn gap4 sp5"><svg class="ico"><use href="#d-smart"/></svg>智能布置</button>
      <span class="tool-caret sp3"></span>
      <span class="tool-sep sp4"></span>
      <button class="btn tool-btn gap5 sp5"><svg class="ico"><use href="#d-skew"/></svg>设置斜墙</button>
      <button class="btn tool-btn gap6 sp6"><svg class="ico"><use href="#d-bow"/></svg>设置拱墙</button>
    </div>
    <div class="d-flex flex-grow-1">
      <div class="vbar d-flex flex-column align-items-center">
        <span class="v-grip"></span>
        <button class="btn v-btn"><svg class="ico"><use href="#v-brush"/></svg></button>
        <span class="v-sep"></span>
        <button class="btn v-btn"><svg class="ico"><use href="#v-copy"/></svg></button>
        <button class="btn v-btn"><svg class="ico"><use href="#v-mirror"/></svg></button>
        <span class="v-sep"></span>
        <button class="btn v-btn"><svg class="ico"><use href="#v-move"/></svg></button>
        <button class="btn v-btn"><svg class="ico"><use href="#v-turn"/></svg></button>
        <span class="v-sep"></span>
        <button class="btn v-btn"><svg class="ico"><use href="#v-extend"/></svg><span class="v-label">延伸</span></button>
        <button class="btn v-btn"><svg class="ico"><use href="#v-trim"/></svg><span class="v-label">修剪</span></button>
        <span class="v-sep"></span>
        <button class="btn v-btn"><svg class="ico"><use href="#v-break"/></svg><span class="v-label">打断</span><span class="v-caret"></span></button>
        <button class="btn v-btn"><svg class="ico"><use href="#v-join"/></svg><span class="v-label">合并</span></button>
        <button class="btn v-btn v-off"><svg class="ico"><use href="#v-split"/></svg><span class="v-label">分割</span></button>
        <span class="v-sep"></span>
        <button class="btn v-btn"><svg class="ico"><use href="#v-align"/></svg><span class="v-label">对齐</span><span class="v-caret"></span></button>
        <button class="btn v-btn"><svg class="ico"><use href="#v-off"/></svg><span class="v-label">偏移</span></button>
        <button class="btn v-btn"><svg class="ico"><use href="#v-stretch"/></svg><span class="v-label">拉伸</span></button>
        <span class="v-sep"></span>
        <button class="btn v-btn v-off v-more"><svg class="ico"><use href="#v-grip-p"/></svg><span class="v-label">设置夹点</span></button>
        <span class="v-sep"></span>
        <button class="btn v-btn"><svg class="ico"><use href="#v-fillet"/></svg><span class="v-label">倒角</span></button>
        <button class="btn v-btn"><svg class="ico"><use href="#v-fillet"/></svg></button>
      </div>

      <svg class="cad-view" viewBox="549 67 604 717" font-family="Liberation Sans, sans-serif">
        <g shape-rendering="crispEdges">
          <path d="M639 66V98H638V132H637V167H636V202H635V238H634V285L1153 307V66Z" fill="#c0bf00"/>
          <path d="M828 98 1023 104 1020 218 825 209Z" fill="#000" stroke="#fff" stroke-width="3"/>
          <path d="M827 207 1019 215" stroke="#ffff00"/>
          <path d="M607 284 1153 307V343L605 322Z" fill="#00bb00"/>
          <path d="M606 288 1153 311" stroke="#00ff00" stroke-width="4"/>
          <path d="M607 285.500 1153 308" stroke="#7f6f00" stroke-width="1.500" stroke-dasharray="16 8"/>
          <path d="M606 291 1153 314" stroke="#3f5f00" stroke-dasharray="9 16"/>
          <path d="M605 322 1153 343V434L602 412Z" fill="#423c05"/>
          <path d="M602 412 1153 434V496L601 473Z" fill="#797979"/>
          <path d="M664 353 760 357 758 417 663 413Z" fill="#0000c4"/>
          <path d="M668 356 755 359 754 412 667 409Z" fill="#006868"/>
          <path d="M667 408 754 412" stroke="#0080ff"/>
          <path d="M663 413 690 414.500" stroke="#b0b0b0"/>
          <path d="M949.500 359 1025 362 1021.600 489 945.500 487Z" fill="#44295c"/>
          <path d="M950 361 1023 364M947 482 1019 485M951 372 950.500 380M953 400 952.500 408M950 437 949.500 445M1020 390 1019.500 398M1018 426 1017.500 434M1019 461 1018.500 470" stroke="#8a55c0" fill="none"/>
          <path d="M947 419 945.500 487" stroke="#d8d0e0"/>
        </g>
        <g fill="none" stroke="#007c00">
          <path d="M549 259 634 262M549 312 606 314M549 365 604 367M549 417 603 418M549 469 602 471"/>
          <path d="M590 523 601 472M782 532 792 481M973 539 983 487"/>
          <path d="M590 497.500 1153 520M581 501 610 494M773 508 802 502M964 516 992 510"/>
          <path d="M562 246l9 3 4 9-4 9-9 4-9-4-4-9 4-9z"/>
          <path d="M562 299l9 3 4 10-4 9-9 4-9-4-4-9 4-10z"/>
          <path d="M562 352l9 3 4 10-4 9-9 4-9-4-4-9 4-10z"/>
          <path d="M562 404l9 3 4 10-4 9-9 4-9-4-4-9 4-10z"/>
          <path d="M562 456l9 3 4 10-4 9-9 4-9-4-4-9 4-10z"/>
          <path d="M588 523l9 4 4 9-4 9-9 4-9-4-4-9 4-9z"/>
          <path d="M780 531l9 4 4 9-4 9-9 4-9-4-4-9 4-9z"/>
          <path d="M971 539l9 4 4 9-4 9-9 4-9-4-4-9 4-9z"/>
          <path d="M1162 547l-9 4-4 9 4 9 9 4"/>
        </g>
        <g fill="#d2d2d2" font-size="14" text-anchor="middle">
          <text x="562" y="264">E</text>
          <text x="562" y="317">D</text>
          <text x="562" y="370">C</text>
          <text x="562" y="422">B</text>
          <text x="562" y="474">A</text>
          <text x="588" y="541">1</text>
          <text x="780" y="549">2</text>
          <text x="971" y="557">3</text>
          <text x="695" y="505" font-size="15">3000</text>
          <text x="886" y="513" font-size="15">3000</text>
          <text x="1077" y="521" font-size="15">3000</text>
        </g>
      </svg>
    </div>
  </main>
</div>

<svg class="mark-up" viewBox="0 0 1153 784">
  <defs>
    <marker id="red-tip" viewBox="0 0 14 10" refX="13" refY="5" markerWidth="14" markerHeight="10" markerUnits="userSpaceOnUse" orient="auto"><path d="M0 0 14 5 0 10 3 5Z" fill="#f23e3e"/></marker>
  </defs>
  <g fill="none" stroke="#f23e3e" stroke-width="2.400">
    <path d="M84 226 973 386" marker-end="url(#red-tip)"/>
    <path d="M85 242 678 379" marker-end="url(#red-tip)"/>
    <path d="M397 633 613 396" marker-end="url(#red-tip)"/>
    <ellipse cx="364.500" cy="636.500" rx="42" ry="25.500" stroke-width="3"/>
  </g>
</svg>
<script src="https://cdn.jsdelivr.net/npm/bootstrap@5.3.0/dist/js/bootstrap.bundle.min.js"></script>
</body>
</html>
